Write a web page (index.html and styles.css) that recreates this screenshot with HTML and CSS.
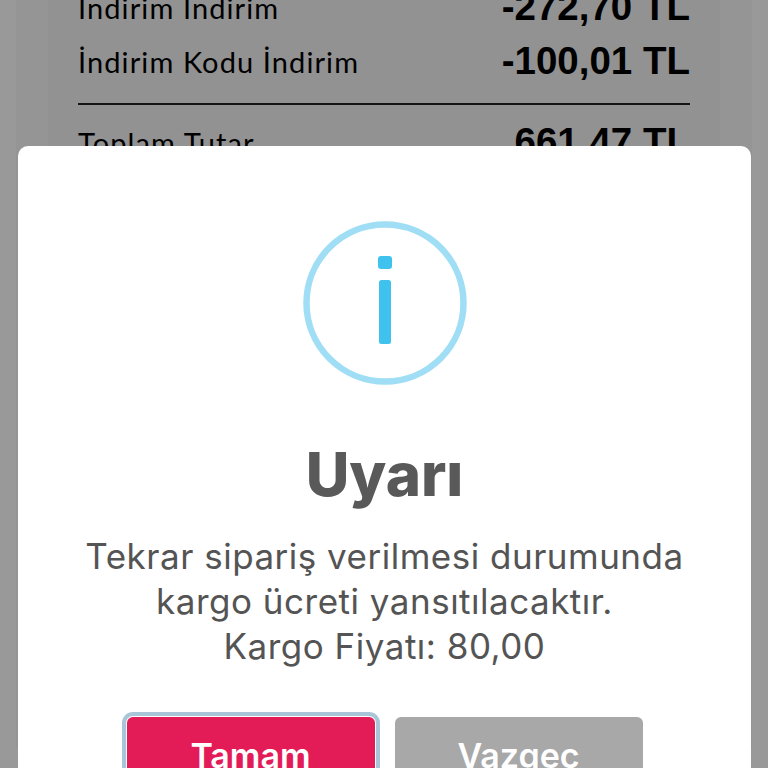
FILE: index.html
```html
<!DOCTYPE html>
<html lang="tr">

<head>
    <meta charset="UTF-8">
    <meta name="viewport" content="width=device-width, initial-scale=1.0">
    <title>Sepet</title>
    <link rel="stylesheet" href="styles.css">
</head>

<body>
    <div class="page">
        <div class="panel">
            <div class="summary">
                <div class="row">
                    <span class="row-label">İndirim İndirim</span>
                    <span class="row-value">-272,70 TL</span>
                </div>
                <div class="row">
                    <span class="row-label">İndirim Kodu İndirim</span>
                    <span class="row-value">-100,01 TL</span>
                </div>
                <hr class="divider">
                <div class="row">
                    <span class="row-label">Toplam Tutar</span>
                    <span class="row-value">661,47 TL</span>
                </div>
            </div>
        </div>
    </div>

    <div class="overlay">
        <div class="modal">
            <svg class="info-icon" width="164" height="164" viewBox="0 0 164 164">
                <circle cx="82" cy="82" r="78.5" fill="none" stroke="#9fdef5" stroke-width="6.5"></circle>
                <rect x="75" y="35" width="14" height="13" rx="3" fill="#3fc3ee"></rect>
                <rect x="76" y="59" width="12" height="64" rx="2.5" fill="#3fc3ee"></rect>
            </svg>
            <h2>Uyarı</h2>
            <p class="message">Tekrar sipariş verilmesi durumunda<br>kargo ücreti yansıtılacaktır.<br>Kargo Fiyatı: 80,00</p>
            <div class="actions">
                <button class="btn btn-confirm">Tamam</button>
                <button class="btn btn-cancel">Vazgeç</button>
            </div>
        </div>
    </div>
</body>

</html>
```

FILE: styles.css
```css
html,
body {
    margin: 0;
    height: 768px;
    overflow: hidden;
}

body {
    position: relative;
    font-family: "Inter", "Liberation Sans", sans-serif;
}

.page {
    height: 100%;
    padding: 0 16px;
    box-sizing: border-box;
    background-color: #fff;
}

.panel {
    height: 100%;
    padding: 0 32px;
    background-color: #f8f8f8;
}

.summary {
    height: 100%;
    padding: 0 30px;
    background-color: #f3f3f3;
}

.row {
    display: flex;
    justify-content: space-between;
    align-items: center;
    height: 54px;
    color: #000;
}

.summary .row:first-child {
    margin-top: -20px;
}

.row-label {
    font-family: "Lato", sans-serif;
    font-size: 29px;
    letter-spacing: 1.1px;
}

.row-value {
    font-family: "Liberation Sans", sans-serif;
    font-size: 38.5px;
    font-weight: 700;
}

.divider {
    height: 2px;
    margin: 15px 0 10px;
    border: none;
    background-color: #222;
}

.overlay {
    position: absolute;
    top: 0;
    left: 0;
    right: 0;
    bottom: 0;
    background-color: rgba(0, 0, 0, 0.4);
}

.modal {
    display: flex;
    flex-direction: column;
    align-items: center;
    height: 700px;
    margin: 146px 17px 0 18px;
    padding-top: 75px;
    box-sizing: border-box;
    background-color: #fff;
    border-radius: 10px;
}

.modal h2 {
    margin: 53px 0 0;
    color: #595959;
    font-size: 60px;
    font-weight: 800;
    line-height: 72px;
}

.message {
    margin: 24px 0 0;
    color: #545454;
    font-size: 35px;
    line-height: 45px;
    letter-spacing: 0.5px;
    text-align: center;
}

.actions {
    display: flex;
    gap: 20px;
    margin-top: 48px;
}

.btn {
    width: 248px;
    height: 76px;
    padding: 0;
    border: none;
    border-radius: 6px;
    color: #fff;
    font-family: "Inter", sans-serif;
    font-size: 34px;
    font-weight: 600;
}

.btn-confirm {
    background-color: #e31c58;
    box-shadow: 0 0 0 1px #fff, 0 0 0 5px #a9c6d8;
}

.btn-cancel {
    background-color: #a8a8a8;
}
```
